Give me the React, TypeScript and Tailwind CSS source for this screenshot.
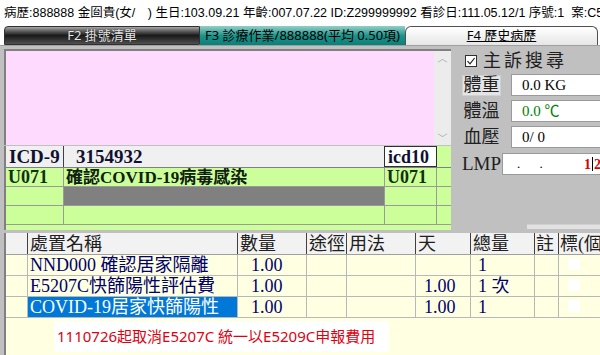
const serif = "font-['Liberation_Serif','Noto_Sans_CJK_TC',serif]"
const sans = "font-['Noto_Sans','Noto_Sans_CJK_TC',sans-serif]"
const topFont = "font-['Liberation_Sans','Noto_Sans_CJK_TC',sans-serif]"

const icdRows = [
  { c9: 'U071', name: '確認COVID-19病毒感染', c10: 'U071', bar: false },
  { c9: '', name: '', c10: '', bar: true },
  { c9: '', name: '', c10: '', bar: false },
]

const orders = [
  { name: 'NND000 確認居家隔離', qty: '1.00', day: '', total: '1', sel: false },
  { name: 'E5207C快篩陽性評估費', qty: '1.00', day: '1.00', total: '1 次', sel: false },
  { name: 'COVID-19居家快篩陽性', qty: '1.00', day: '1.00', total: '1', sel: true },
]

function Vital({ label, value, boxed, green }: { label: string; value: string; boxed?: boolean; green?: boolean }) {
  return (
    <div className="flex items-center h-[26px]">
      <div
        className={`w-[39px] h-[21px] ml-[11px] flex items-center justify-center text-[18px] leading-none text-[#202020] ${serif} ${
          boxed ? 'bg-[#e4e4e4] border border-[#d0d0d0]' : ''
        }`}
      >
        {label}
      </div>
      <div
        className={`ml-[10px] flex-1 h-[22px] bg-white border border-[#9a9a9a] flex items-center pl-[10px] text-[15px] ${serif} ${
          green ? 'text-[#008000]' : 'text-black'
        }`}
      >
        {value}
      </div>
    </div>
  )
}

export default function App() {
  return (
    <div className={`w-[600px] h-[355px] overflow-hidden bg-white ${sans}`}>
      <div className={`h-[26px] pl-[4px] flex items-center whitespace-nowrap text-[12.5px] text-black overflow-hidden ${topFont}`}>
        病歷:888888 金囼貴(女/　) 生日:103.09.21 年齡:007.07.22 ID:Z299999992 看診日:111.05.12/1 序號:1&nbsp; 案:C5(部
      </div>

      <div className="h-[19px] flex pl-[4px] text-[13px]">
        <div className="w-[196px] rounded-tl-[4px] border border-[#303030] bg-linear-to-b from-[#a8a8a8] via-[#1a1a1a] to-[#505050] flex items-center justify-center text-[#e8e8e8] [text-shadow:0_0_1px_#000]">
          F2 掛號清單
        </div>
        <div className="w-[205px] bg-linear-to-b from-[#8fd0c8] via-[#1a958c] to-[#0b7f78] flex items-center justify-center text-black">
          F3 診療作業/888888(平均 0.50項)
        </div>
        <div className="w-[193px] rounded-t-[6px] border border-[#505050] border-b-0 bg-linear-to-b from-white to-[#e6e6e6] flex items-center justify-center text-black underline">
          F4 歷史病歷
        </div>
      </div>

      <div className="flex h-[310px]">
        <div className="w-[4px] bg-[#f4f4f4]" />
        <div className="w-[2px] bg-[#3a4654]" />
        <div className="flex-1 bg-[#c0c0c0] border-t border-[#a0a0a0] pl-[4px] flex flex-col">
          <div className="flex h-[184px]">
            <div className="w-[447px] flex flex-col pt-[3px]">
              <div className="h-[96px] flex border-t-2 border-l-2 border-[#808080] bg-[#ffdaff]">
                <div className="flex-1" />
                <div className="w-[17px] bg-[#ececec] flex flex-col items-center justify-between py-[2px] text-[#a8a8a8] text-[10px] leading-none">
                  <span>︿</span>
                  <span>﹀</span>
                </div>
              </div>
              <div className={`h-[84px] mt-[1px] bg-[#ccff99] border-l-2 border-[#808080] ${serif} font-bold`}>
                <div className="h-[22px] flex border-b border-[#808080]">
                  <div className="w-[58px] bg-[#f0f0f0] border-r border-[#404040] pl-[3px] text-[19px] leading-[22px] text-[#101030]">ICD-9</div>
                  <div className="w-[320px] bg-[#f0f0f0] pl-[12px] text-[19px] leading-[22px] text-[#101030]">3154932</div>
                  <div className="w-[53px] bg-white border border-[#303030] pl-[3px] text-[18px] leading-[20px] text-[#101030]">icd10</div>
                  <div className="flex-1" />
                </div>
                {icdRows.map((r, i) => (
                  <div key={i} className="h-[19px] flex border-b border-[#9a9a9a]">
                    <div className="w-[58px] border-r border-[#9a9a9a] pl-[2px] text-[18px] leading-[19px] text-[#103010]">{r.c9}</div>
                    <div className={`w-[320px] pl-[2px] text-[17px] leading-[19px] text-[#102010] ${r.bar ? 'bg-[#808080]' : ''}`}>{r.name}</div>
                    <div className="w-[53px] border-l border-r border-[#9a9a9a] pl-[2px] text-[18px] leading-[19px] text-[#103010]">{r.c10}</div>
                    <div className="flex-1" />
                  </div>
                ))}
              </div>
            </div>

            <div className="flex-1 flex flex-col pt-[4px]">
              <div className={`h-[22px] flex items-center pl-[14px] text-[18px] text-[#202020] ${serif}`}>
                <span className="w-[12px] h-[12px] border border-[#303030] bg-white flex items-center justify-center">
                  <svg width="10" height="10" viewBox="0 0 10 10">
                    <path d="M1.5 5.2 L4 7.8 L8.6 2" fill="none" stroke="#202020" strokeWidth="1.2" />
                  </svg>
                </span>
                <span className="ml-[6px] tracking-[3px]">主訴搜尋</span>
              </div>
              <Vital label="體重" value="0.0 KG" boxed />
              <Vital label="體溫" value="0.0 ℃" green />
              <Vital label="血壓" value="0/  0" />
              <div className="flex items-center h-[26px] mt-[1px]">
                <div className={`ml-[11px] w-[38px] text-[19px] text-[#202020] ${serif}`}>LMP</div>
                <div className={`ml-[2px] flex-1 h-[22px] bg-white border border-[#9a9a9a] flex items-center pl-[14px] text-[13px] ${serif}`}>
                  <span className="tracking-[8px]">. .</span>
                  <span className="ml-auto font-bold text-[#e00000] text-[14px] flex items-center">
                    1<span className="w-[1px] h-[14px] bg-black mx-[1px]" />2
                  </span>
                </div>
              </div>
              <div className="flex-1" />
              <div className="h-[5px] ml-[76px] bg-[#e2e2e2] border-t border-[#d0d0d0] mb-[1px]" />
            </div>
          </div>

          <div className={`flex-1 flex flex-col pt-[3px] ${serif}`}>
            <div className="flex-1 bg-[#ffffe1] border-l-2 border-[#808080] flex flex-col">
              <div className="h-[22px] flex bg-[#f2f2f2] border-b border-[#a0a0a0] text-[18px] leading-[22px] text-[#202020] whitespace-nowrap">
                <div className="w-[22px] border-r border-[#404040]" />
                <div className="w-[210px] border-r border-[#404040] pl-[2px]">處置名稱</div>
                <div className="w-[69px] border-r border-[#404040] pl-[2px]">數量</div>
                <div className="w-[40px] border-r border-[#404040] pl-[2px]">途徑</div>
                <div className="w-[69px] border-r border-[#404040] pl-[2px]">用法</div>
                <div className="w-[55px] border-r border-[#404040] pl-[2px]">天</div>
                <div className="w-[64px] border-r border-[#404040] pl-[2px]">總量</div>
                <div className="w-[24px] border-r border-[#404040] pl-[1px]">註</div>
                <div className="flex-1 pl-[1px] overflow-hidden">標(個</div>
              </div>
              {orders.map((o, i) => (
                <div key={i} className="h-[21px] flex border-b border-[#b8b8b8] text-[18px] leading-[20px] text-[#000070] whitespace-nowrap">
                  <div className="w-[22px] border-r border-[#b8b8b8]" />
                  <div className={`w-[210px] border-r border-[#b8b8b8] pl-[2px] ${o.sel ? 'bg-[#0078d7] text-white' : ''}`}>{o.name}</div>
                  <div className="w-[69px] border-r border-[#b8b8b8] pl-[13px]">{o.qty}</div>
                  <div className="w-[40px] border-r border-[#b8b8b8]" />
                  <div className="w-[69px] border-r border-[#b8b8b8]" />
                  <div className="w-[55px] border-r border-[#b8b8b8] pl-[8px]">{o.day}</div>
                  <div className="w-[64px] border-r border-[#b8b8b8] pl-[7px]">{o.total}</div>
                  <div className="w-[24px] border-r border-[#b8b8b8]" />
                  <div className="flex-1 pl-[9px] pt-[3px]">
                    <div className="w-[12px] h-[12px] bg-white" />
                  </div>
                </div>
              ))}
              <div className="flex-1 pl-[48px] pt-[3px]">
                <div className={`w-[335px] h-[31px] bg-white pl-[3px] flex items-center text-[15px] text-[#e00010] whitespace-nowrap ${sans}`}>
                  1110726起取消E5207C 統一以E5209C申報費用
                </div>
              </div>
            </div>
          </div>
        </div>
      </div>
    </div>
  )
}
